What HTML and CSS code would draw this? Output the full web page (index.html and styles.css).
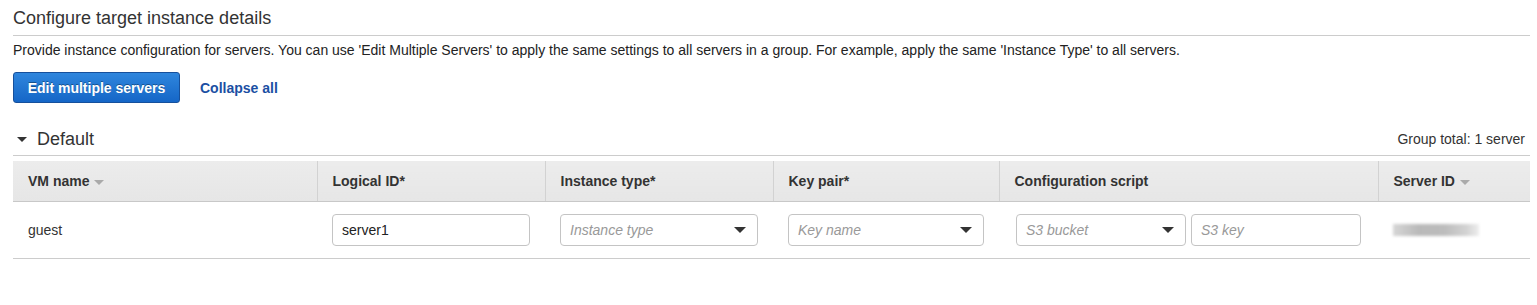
FILE: index.html
```html
<!DOCTYPE html>
<html lang="en">
<head>
    <meta charset="UTF-8">
    <title>Configure target instance details</title>
    <link rel="stylesheet" href="styles.css">
</head>
<body>
    <div class="page">
        <h2 class="title">Configure target instance details</h2>
        <p class="desc">Provide instance configuration for servers. You can use 'Edit Multiple Servers' to apply the same settings to all servers in a group. For example, apply the same 'Instance Type' to all servers.</p>

        <div class="actions">
            <button class="btn-primary">Edit multiple servers</button>
            <a href="#" class="link-action">Collapse all</a>
        </div>

        <div class="group-head">
            <span class="group-name"><span class="caret-down"></span>Default</span>
            <span class="group-total">Group total: 1 server</span>
        </div>

        <table class="servers">
            <colgroup>
                <col style="width: 304px">
                <col style="width: 228px">
                <col style="width: 228px">
                <col style="width: 226px">
                <col style="width: 379px">
                <col>
            </colgroup>
            <thead>
                <tr>
                    <th>VM name <span class="sort"></span></th>
                    <th>Logical ID*</th>
                    <th>Instance type*</th>
                    <th>Key pair*</th>
                    <th>Configuration script</th>
                    <th>Server ID <span class="sort"></span></th>
                </tr>
            </thead>
            <tbody>
                <tr>
                    <td>guest</td>
                    <td><input class="field" type="text" value="server1"></td>
                    <td><div class="select"><span>Instance type</span><i></i></div></td>
                    <td><div class="select"><span>Key name</span><i></i></div></td>
                    <td class="script-cell">
                        <div class="script-pair">
                            <div class="select"><span>S3 bucket</span><i></i></div>
                            <input class="field" type="text" placeholder="S3 key">
                        </div>
                    </td>
                    <td><div class="redacted"></div></td>
                </tr>
            </tbody>
        </table>
    </div>
</body>
</html>
```

FILE: styles.css
```css
body {
    margin: 0;
    font-family: "Liberation Sans", Arial, sans-serif;
    font-size: 14px;
    color: #333;
    background: #fff;
}
.page {
    padding: 0 7px 0 13px;
}
.title {
    margin: 0;
    padding: 7px 0 6px;
    font-size: 18px;
    line-height: 22px;
    font-weight: normal;
    color: #333;
    border-bottom: 1px solid #ccc;
}
.desc {
    margin: 6px 0 0;
    line-height: 17px;
    color: #222;
}
.actions {
    display: flex;
    align-items: center;
    margin-top: 13px;
}
.btn-primary {
    width: 167px;
    height: 31px;
    padding: 0;
    font-family: inherit;
    font-size: 14px;
    font-weight: bold;
    color: #fff;
    text-shadow: 0 -1px 0 rgba(0,0,0,0.35);
    background: linear-gradient(#2f86dd, #1566c7);
    border: 1px solid #16509c;
    border-radius: 3px;
}
.link-action {
    margin-left: 20px;
    font-weight: bold;
    color: #1b4fa3;
    text-decoration: none;
}
.group-head {
    display: flex;
    justify-content: space-between;
    align-items: center;
    margin-top: 25px;
    padding-bottom: 5px;
    border-bottom: 1px solid #ccc;
}
.group-name {
    display: flex;
    align-items: center;
    font-size: 18px;
    line-height: 22px;
    color: #333;
}
.caret-down {
    width: 0;
    height: 0;
    margin: 0 10px 0 4px;
    border-left: 5px solid transparent;
    border-right: 5px solid transparent;
    border-top: 5px solid #333;
}
.group-total {
    margin-right: 5px;
    color: #333;
}
.servers {
    width: 100%;
    margin-top: 5px;
    border-collapse: collapse;
    table-layout: fixed;
}
.servers th {
    height: 40px;
    padding: 0 15px;
    text-align: left;
    font-weight: bold;
    color: #333;
    background: linear-gradient(#ececec, #e6e6e6);
    border-left: 1px solid #d2d2d2;
    border-bottom: 1px solid #c8c8c8;
}
.servers th:first-child {
    border-left: none;
}
.sort {
    display: inline-block;
    vertical-align: middle;
    margin-left: 1px;
    border-left: 5px solid transparent;
    border-right: 5px solid transparent;
    border-top: 5px solid #aaa;
}
.servers td {
    height: 56px;
    padding: 0 15px;
    border-bottom: 1px solid #ccc;
    color: #333;
}
.servers td.script-cell {
    padding-left: 17px;
}
.field,
.select {
    box-sizing: border-box;
    width: 100%;
    height: 32px;
    padding: 0 9px;
    border: 1px solid #c4c4c4;
    border-radius: 4px;
    font-family: inherit;
    font-size: 14px;
    color: #222;
    background: #fff;
}
.field::placeholder {
    font-style: italic;
    color: #999;
}
.select {
    display: flex;
    align-items: center;
    justify-content: space-between;
}
.select span {
    font-style: italic;
    color: #999;
}
.select i {
    width: 0;
    height: 0;
    margin-right: 2px;
    border-left: 6px solid transparent;
    border-right: 6px solid transparent;
    border-top: 6px solid #333;
}
.script-pair {
    display: flex;
    gap: 5px;
}
.script-pair .select,
.script-pair .field {
    width: 170px;
    flex: none;
}
.redacted {
    width: 86px;
    height: 12px;
    margin-left: 0;
    background: linear-gradient(90deg, #d6d6d6, #b9b9b9 30%, #bcbcbc 60%, #d2d2d2 85%, #eee);
    filter: blur(1.5px);
}
```
